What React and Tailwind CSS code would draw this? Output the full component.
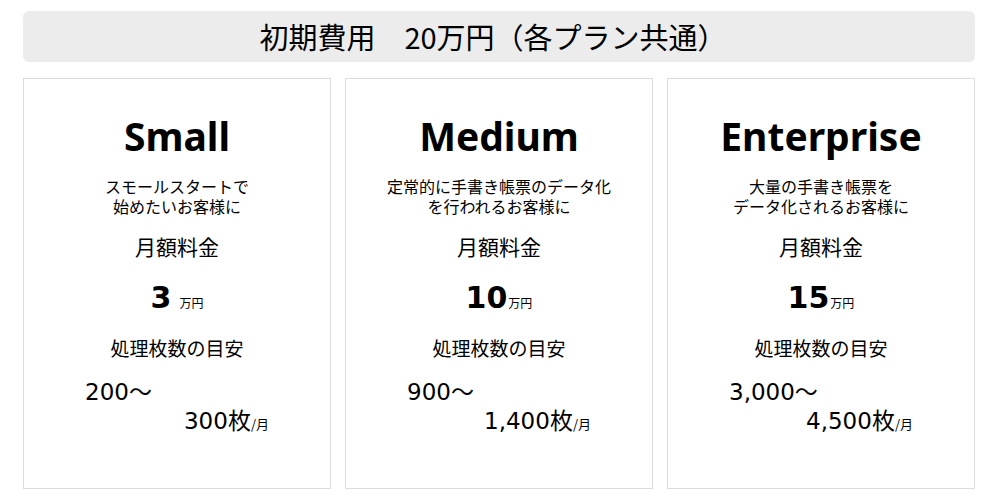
import React from "react";

const plans = [
  {
    name: "Small",
    desc: ["スモールスタートで", "始めたいお客様に"],
    price: "3",
    spaced: true,
    from: "200〜",
    to: "300枚",
  },
  {
    name: "Medium",
    desc: ["定常的に手書き帳票のデータ化", "を行われるお客様に"],
    price: "10",
    spaced: false,
    from: "900〜",
    to: "1,400枚",
  },
  {
    name: "Enterprise",
    desc: ["大量の手書き帳票を", "データ化されるお客様に"],
    price: "15",
    spaced: false,
    from: "3,000〜",
    to: "4,500枚",
  },
];

const font = { fontFamily: '"DejaVu Sans", "Noto Sans CJK JP", sans-serif' };
const jp = { fontFamily: '"Noto Sans CJK JP", sans-serif' };

export default function App() {
  return (
    <div className="w-[1000px] h-[500px] bg-white text-black" style={font}>
      <div className="ml-[23px] w-[952px] pt-[11px]">
        <div className="h-[51px] rounded-[6px] bg-[#ececec] flex items-center justify-center text-[29px] leading-none" style={jp}>
          <span className="-ml-[12px]">初期費用　20万円（各プラン共通）</span>
        </div>
        <div className="mt-[16px] grid grid-cols-3 gap-[14px]">
          {plans.map((p) => (
            <div key={p.name} className="h-[411px] border border-[#dcdcdc] flex flex-col items-center">
              <div className="mt-[36px] h-[40px] flex items-center text-[39px] font-bold leading-none" style={{ fontFamily: '"Noto Sans", "Noto Sans CJK JP", sans-serif' }}>
                {p.name}
              </div>
              <div className="mt-[21px] text-[16px] leading-[20px] text-center" style={jp}>
                {p.desc.map((d) => (
                  <div key={d}>{d}</div>
                ))}
              </div>
              <div className="mt-[18px] text-[21px] leading-[24px]" style={jp}>
                月額料金
              </div>
              <div className="mt-[25px] h-[30px] flex items-baseline">
                <span className="text-[30px] font-bold leading-[30px]">{p.price}</span>
                <span className={`text-[12px] leading-none ${p.spaced ? "ml-[8px]" : "ml-[1px]"}`} style={jp}>万円</span>
              </div>
              <div className="mt-[24px] text-[19px] leading-[22px]" style={jp}>
                処理枚数の目安
              </div>
              <div className="self-stretch px-[61px] mt-[19px] flex flex-col">
                <div className="text-[23px] leading-[29px] self-start">{p.from}</div>
                <div className="self-end leading-[29px]">
                  <span className="text-[23px]">{p.to}</span>
                  <span className="text-[13px]" style={jp}>/月</span>
                </div>
              </div>
            </div>
          ))}
        </div>
      </div>
    </div>
  );
}
